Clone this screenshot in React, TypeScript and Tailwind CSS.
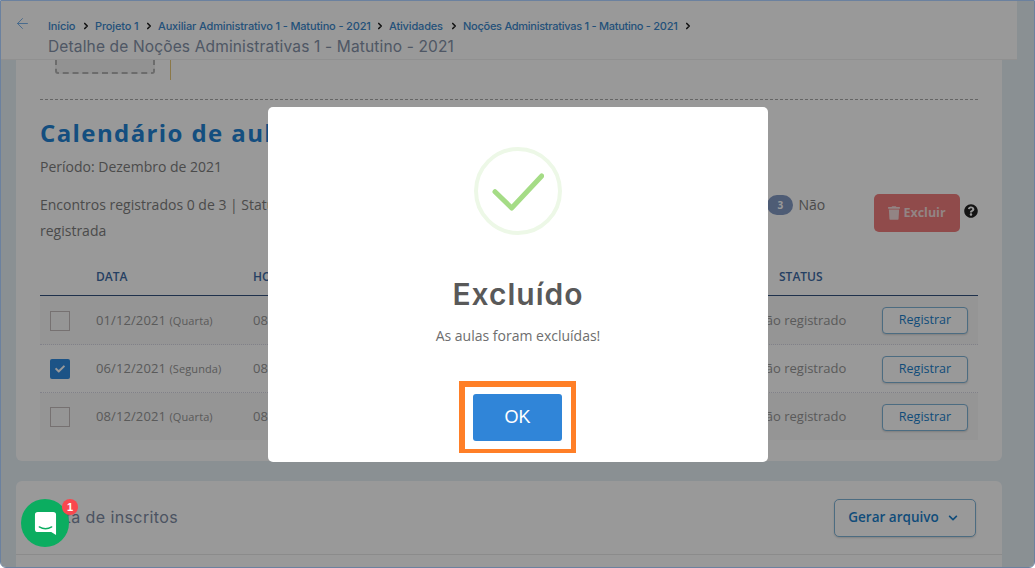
import { ArrowLeft, ChevronRight } from "lucide-react";
import { FaCheck, FaChevronDown, FaQuestionCircle, FaTrash } from "react-icons/fa";

const migalhas = [
  { texto: "Início", largura: "w-[28px]", espaco: "tracking-[-0.15px]" },
  { texto: "Projeto 1", largura: "w-[44px]", espaco: "tracking-[-0.15px]" },
  { texto: "Auxiliar Administrativo 1 - Matutino - 2021", largura: "w-[212px]", espaco: "tracking-[-0.15px]" },
  { texto: "Atividades", largura: "w-[55px]", espaco: "tracking-[-0.15px]" },
  { texto: "Noções Administrativas 1 - Matutino - 2021", largura: "w-[215px]", espaco: "tracking-[-0.27px]" },
];

const aulas = [
  { data: "01/12/2021", dia: "(Quarta)", marcada: false, fundo: "bg-[#f9f9f9]", altura: "h-[49px]" },
  { data: "06/12/2021", dia: "(Segunda)", marcada: true, fundo: "bg-white", altura: "h-[48px]" },
  { data: "08/12/2021", dia: "(Quarta)", marcada: false, fundo: "bg-[#f9f9f9]", altura: "h-[47px]" },
];

function Cabecalho() {
  return (
    <header className="relative z-10 h-[59px] w-[1016px] shrink-0 border-b border-[#f0f0f0] bg-white pl-[47px] pt-[17px] font-['Inter',sans-serif]">
      <ArrowLeft className="absolute left-[13px] top-[14px] h-[17px] w-[17px] text-[#69a8e8]" strokeWidth={1.25} />
      <nav className="flex h-[16px] items-center text-[11px] font-medium text-[#3b88cc]">
        {migalhas.map((item) => (
          <div key={item.texto} className="flex items-center">
            <span className={`${item.largura} ${item.espaco} whitespace-nowrap`}>{item.texto}</span>
            <ChevronRight className="mx-[4.5px] h-[10px] w-[10px] text-[#222222]" strokeWidth={4} />
          </div>
        ))}
      </nav>
      <h1 className="mt-[3px] whitespace-nowrap text-[15.5px] font-normal leading-[20px] tracking-[0.15px] text-[#8492a8]">
        Detalhe de Noções Administrativas 1 - Matutino - 2021
      </h1>
    </header>
  );
}

function LinhaAula({ aula }: { aula: (typeof aulas)[number] }) {
  return (
    <div className={`grid grid-cols-[56px_157px_503px_126px_86px] items-center border-b border-dotted border-[#d8d8e4] pt-px last:border-b-0 ${aula.fundo} ${aula.altura}`}>
      <div className="pl-[10px]">
        {aula.marcada ? (
          <div className="flex h-[20px] w-[20px] items-center justify-center rounded-[2px] bg-[#2f8ae0]">
            <FaCheck className="h-[10px] w-[10px] text-white" />
          </div>
        ) : (
          <div className="h-[20px] w-[20px] border border-[#c5bcbc]" />
        )}
      </div>
      <div className="whitespace-nowrap text-[13px] tracking-[0.1px] text-[#969696]">
        {aula.data} <span className="text-[11px]">{aula.dia}</span>
      </div>
      <div className="text-[13px] text-[#969696]">08:00 às 12:00</div>
      <div className="whitespace-nowrap text-[13px] text-[#969696]">Não registrado</div>
      <button className="h-[27px] rounded-[4px] border border-[#7fb4d8] bg-white text-[12.5px] font-medium text-[#1b7fcc] shadow-[0_1px_2px_rgba(0,0,0,0.15)]">
        Registrar
      </button>
    </div>
  );
}

function CartaoCalendario() {
  return (
    <section className="ml-[15px] h-[401px] w-[986px] shrink-0 rounded-b-[6px] bg-white px-[24px]">
      <div className="flex h-[40px] items-start border-b border-dashed border-[#a8a8a8]">
        <div className="-mt-[25px] ml-[15px] h-[39px] w-[100px] rounded-[3px] border-2 border-dashed border-[#b5b5b5] bg-[#f4f4f4]" />
        <div className="ml-[15px] h-[20px] w-px bg-[#e8c878]" />
      </div>
      <h2 className="mt-[16px] whitespace-nowrap text-[24px] font-bold leading-[34px] tracking-[1.4px] text-[#2283d4]">Calendário de aulas</h2>
      <p className="mt-[7px] text-[14px] leading-[20px] text-[#7d7d7d]">Período: Dezembro de 2021</p>
      <div className="mt-[15px] flex h-[56px] items-start">
        <p className="w-[799px] text-[14px] leading-[26px] text-[#7d7d7d]">
          Encontros registrados 0 de 3 | Status das aulas:
          <span className="ml-[417px] inline-flex h-[20px] w-[26px] items-center justify-center rounded-full bg-[#8299c4] align-[1px] text-[10px] font-bold text-white">
            3
          </span>
          <span className="ml-[5px]">Não</span>
          <br />
          registrada
        </p>
        <button className="ml-[35px] mt-[2px] flex h-[38px] w-[86px] items-center justify-center gap-[3px] rounded-[5px] bg-[#f07d7d] text-[12.5px] font-bold text-[#f4dcdc]">
          <FaTrash className="h-[14px] w-[12px]" />
          Excluir
        </button>
        <FaQuestionCircle className="ml-[4px] mt-[12px] h-[14px] w-[14px] text-[#222222]" />
      </div>
      <div className="mt-[6px] grid h-[42px] grid-cols-[56px_157px_526px_auto] items-center border-b border-[#34527f] pt-[4px] text-[12px] font-semibold text-[#3f6ba5]">
        <span />
        <span>DATA</span>
        <span>HORÁRIO</span>
        <span>STATUS</span>
      </div>
      {aulas.map((aula) => (
        <LinhaAula key={aula.data} aula={aula} />
      ))}
    </section>
  );
}

function CartaoInscritos() {
  return (
    <section className="ml-[15px] mt-[20px] h-[120px] w-[986px] shrink-0 rounded-[6px] bg-white">
      <div className="flex h-[74px] items-center justify-between border-b border-[#e8e8e8] pl-[27px] pr-[26px]">
        <h3 className="-mt-[2px] font-['Inter',sans-serif] text-[16px] font-normal tracking-[0.4px] text-[#7d8ba3]">Lista de inscritos</h3>
        <button className="flex h-[38px] w-[142px] items-center justify-center gap-[9px] rounded-[5px] border border-[#7fb4d8] bg-white pr-[4px] text-[13.5px] font-semibold text-[#1b7fcc] shadow-[0_1px_2px_rgba(0,0,0,0.15)]">
          Gerar arquivo
          <FaChevronDown className="h-[10px] w-[10px]" />
        </button>
      </div>
    </section>
  );
}

function ModalExcluido() {
  return (
    <div className="absolute inset-0 z-20 bg-black/40">
      <div className="absolute left-[267px] top-[106px] flex h-[355px] w-[500px] flex-col items-center rounded-[5px] bg-white pt-[40px]">
        <div className="flex h-[88px] w-[88px] items-center justify-center rounded-full border-4 border-[#edf8e7]">
          <svg viewBox="0 0 52 40" className="h-[40px] w-[52px]" fill="none" stroke="#a5dc86" strokeWidth="5" strokeLinecap="round" strokeLinejoin="round">
            <path d="M3 20.7 L19.7 37 L49.7 5" />
          </svg>
        </div>
        <h2 className="mt-[39px] font-['Inter',sans-serif] text-[30px] font-semibold leading-[40px] tracking-[1px] text-[#595959]">Excluído</h2>
        <p className="mt-[12px] text-[14px] leading-[20px] text-[#6e6e6e]">As aulas foram excluídas!</p>
        <div className="-ml-px mt-[35px] border-b-4 border-l-[6px] border-r-[5px] border-t-[6px] border-[#ff7f27] pb-[8px] pl-[8px] pr-[9px] pt-[7px]">
          <button className="h-[47px] w-[89px] rounded-[3px] bg-[#3085d8] font-['Liberation_Sans',sans-serif] text-[18px] text-white">OK</button>
        </div>
      </div>
    </div>
  );
}

function BotaoChat() {
  return (
    <div className="absolute left-[20px] top-[498px] z-30 flex h-[48px] w-[48px] items-center justify-center rounded-full bg-[#0bad60]">
      <svg viewBox="0 0 24 26" className="h-[25px] w-[23px]">
        <path d="M4 1 H20 a3 3 0 0 1 3 3 V25 L18 22 H4 a3 3 0 0 1 -3 -3 V4 a3 3 0 0 1 3 -3 Z" fill="white" />
        <path d="M5.5 16.5 Q12 20.5 18.5 16.5" fill="none" stroke="#0bad60" strokeWidth="1.4" strokeLinecap="round" />
      </svg>
      <span className="absolute -right-[9px] top-0 flex h-[16px] w-[16px] items-center justify-center rounded-full bg-[#f9474e] font-['Liberation_Sans',sans-serif] text-[11px] font-bold text-white">
        1
      </span>
    </div>
  );
}

export default function App() {
  return (
    <div className="h-[568px] w-[1035px] bg-white font-['Open_Sans',sans-serif]">
      <div className="relative h-[568px] w-[1035px] overflow-hidden rounded-b-[6px] border border-[#6b819f] bg-[#e6f0f6]">
        <div className="flex h-full flex-col">
          <Cabecalho />
          <CartaoCalendario />
          <CartaoInscritos />
        </div>
        <ModalExcluido />
        <BotaoChat />
      </div>
    </div>
  );
}
